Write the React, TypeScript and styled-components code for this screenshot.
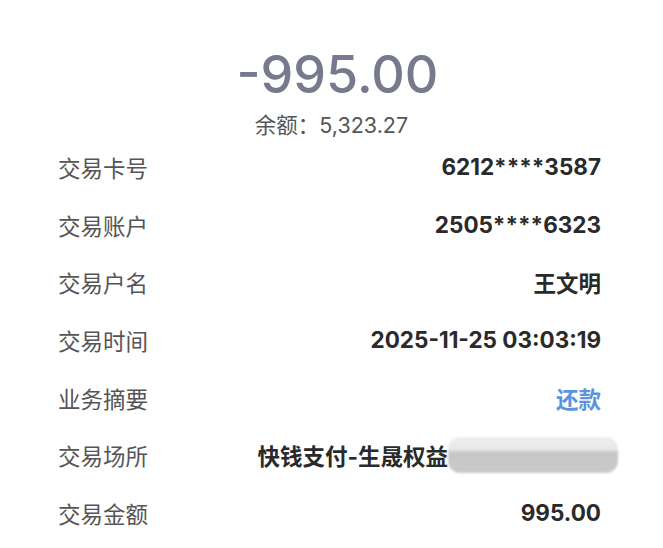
import styled, { createGlobalStyle } from 'styled-components';

const Global = createGlobalStyle`
    html, body {
        margin: 0;
        padding: 0;
        background: #ffffff;
    }
    body {
        font-family: Inter, "Noto Sans CJK SC", sans-serif;
    }
`

const Page = styled.div`
    width: 663px;
    height: 548px;
    overflow: hidden;
    background: #ffffff;
    display: flex;
    flex-direction: column;
`

const Header = styled.div`
    display: flex;
    flex-direction: column;
    align-items: center;
    padding-top: 44px;
`

const Amount = styled.div`
    font-family: Inter, "Noto Sans CJK SC", sans-serif;
    font-size: 52px;
    font-weight: 450;
    line-height: 62px;
    color: #777a8c;
    margin-left: 12px;
`

const Balance = styled.div`
    font-family: Inter, "Noto Sans CJK SC", sans-serif;
    font-size: 21.5px;
    line-height: 26px;
    color: #555555;
    margin-top: 6px;
`

const List = styled.div`
    display: flex;
    flex-direction: column;
    padding: 0 62px 0 58px;
`

const Row = styled.div`
    height: 57.7px;
    display: flex;
    align-items: center;
    justify-content: space-between;
`

const Label = styled.div`
    font-family: "Noto Sans CJK SC", sans-serif;
    font-size: 22.5px;
    color: #555555;
`

const Value = styled.div<{ $blue?: boolean }>`
    font-family: Inter, "Noto Sans CJK SC", sans-serif;
    font-size: 22.5px;
    font-weight: 700;
    color: ${p => (p.$blue ? '#5b93e0' : '#2a2a2a')};
    display: flex;
    align-items: center;
`

const Blur = styled.div`
    width: 170px;
    height: 36px;
    margin-right: -17px;
    border-radius: 12px;
    background: linear-gradient(180deg, #eeeeee 0%, #e8e8e8 36%, #c6c6c6 42%, #cacaca 100%);
    filter: blur(1px);
`

const rows = [
    { label: '交易卡号', value: '6212****3587' },
    { label: '交易账户', value: '2505****6323' },
    { label: '交易户名', value: '王文明' },
    { label: '交易时间', value: '2025-11-25 03:03:19' },
    { label: '业务摘要', value: '还款', blue: true },
    { label: '交易场所', value: '快钱支付-生晟权益', blur: true },
    { label: '交易金额', value: '995.00' },
]

const App = () => {
    return (
        <Page>
            <Global />
            <Header>
                <Amount>-995.00</Amount>
                <Balance>余额：5,323.27</Balance>
            </Header>
            <List>
                {rows.map((r) => (
                    <Row key={r.label}>
                        <Label>{r.label}</Label>
                        <Value $blue={r.blue}>
                            {r.value}
                            {r.blur && <Blur />}
                        </Value>
                    </Row>
                ))}
            </List>
        </Page>
    )
}

export default App
